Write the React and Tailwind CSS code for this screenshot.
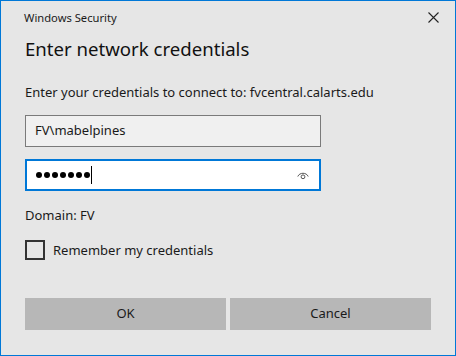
import { useState } from "react";

export default function App() {
  const [remember, setRemember] = useState(false);

  return (
    <div className="w-[456px] h-[356px] border border-[#0078d7] bg-[#e6e6e6] text-[#1a1a1a] font-['Noto_Sans',sans-serif] flex flex-col">
      {/* Title bar */}
      <div className="h-[32px] flex items-center justify-between pl-[23px] pr-[16px]">
        <span className="text-[11.2px] leading-none text-[#1a1a1a] mt-[2px]">Windows Security</span>
        <svg width="11" height="11" viewBox="0 0 11 11" className="mt-[1px]">
          <path d="M0.5 0.5 L10.5 10.5 M10.5 0.5 L0.5 10.5" stroke="#222" strokeWidth="1.1" fill="none" />
        </svg>
      </div>

      <div className="pl-[24px] pr-[24px] flex flex-col">
        <h1 className="text-[18.6px] leading-[28px] mt-[2px] text-[#111]">Enter network credentials</h1>

        <p className="text-[13px] leading-[20px] mt-[19px]">
          Enter your credentials to connect to: fvcentral.calarts.edu
        </p>

        <div className="mt-[13px] w-[296px] h-[32px] border border-[#7a7a7a] bg-[#f0f0f0] flex items-center px-[9px] text-[13px]">
          FV\mabelpines
        </div>

        <div className="mt-[12px] w-[296px] h-[32px] border-2 border-[#0078d7] bg-white flex items-center pl-[9px] pr-[10px]">
          <div className="flex items-center gap-[2px]">
            {[0, 1, 2, 3, 4, 5, 6].map((i) => (
              <span key={i} className="w-[6px] h-[6px] rounded-full bg-black" />
            ))}
          </div>
          <span className="w-px h-[18px] bg-black ml-[1px]" />
          <div className="flex-1" />
          <svg width="12" height="9" viewBox="0 0 12 9">
            <path d="M0.8 5.5 C2.5 1.2 9.5 1.2 11.2 5.5" stroke="#555" strokeWidth="1" fill="none" />
            <circle cx="6" cy="5.8" r="1.9" stroke="#555" strokeWidth="1" fill="none" />
          </svg>
        </div>

        <p className="text-[13px] leading-[20px] mt-[14px]">Domain: FV</p>

        <label className="mt-[15px] flex items-center gap-[8px] cursor-pointer">
          <span
            onClick={() => setRemember(!remember)}
            className="w-[20px] h-[20px] border-2 border-[#333] bg-transparent"
          />
          <span className="text-[13px] leading-[20px]">Remember my credentials</span>
        </label>

        <div className="mt-[38px] flex gap-[4px]">
          <button className="w-[201px] h-[32px] bg-[#b7b7b7] text-[13px]">OK</button>
          <button className="w-[201px] h-[32px] bg-[#b7b7b7] text-[13px]">Cancel</button>
        </div>
      </div>
    </div>
  );
}
